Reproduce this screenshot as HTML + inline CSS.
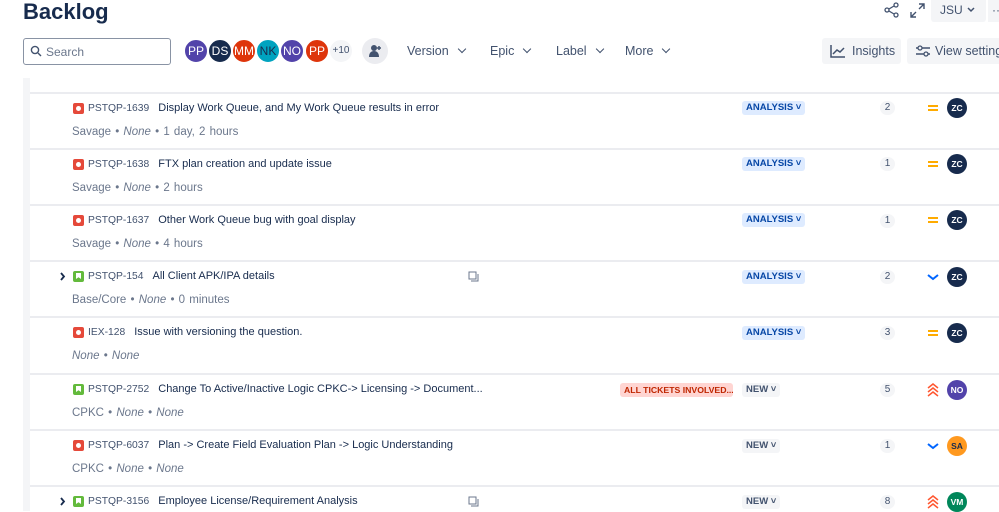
<!DOCTYPE html>
<html><head><meta charset="utf-8"><style>
*{margin:0;padding:0;box-sizing:border-box}
body{width:999px;height:511px;overflow:hidden;background:#fff;font-family:"Liberation Sans",sans-serif;color:#172b4d;position:relative}
.abs{position:absolute}
h1{position:absolute;left:23px;top:-1px;font-size:22px;font-weight:600;color:#172b4d}
.search{left:23px;top:38px;width:148px;height:27px;border:1px solid #8993a4;border-radius:3px;font-size:12px;color:#6b778c;padding:6px 0 0 22px}
.av{width:26px;height:26px;border-radius:50%;color:#fff;font-size:12px;text-align:center;line-height:22px;border:2px solid #fff;top:38px}
.flt{top:44px;font-size:12.5px;color:#42526e}
.flt:after{content:"";display:inline-block;width:5px;height:5px;border-right:1.5px solid #42526e;border-bottom:1.5px solid #42526e;transform:rotate(45deg);margin-left:10px;position:relative;top:-3px}
.btn{background:#f4f5f7;border-radius:3px;top:38px;height:26px;font-size:12.5px;color:#42526e;padding:6px 0 0 8px;white-space:nowrap;overflow:hidden}
.strip{left:23px;top:78px;width:7px;height:433px;background:#f4f5f7}
.sep{left:30px;width:969px;height:2px;background:#ebecf0}
.t{font-size:11px;color:#172b4d;white-space:nowrap}
.k{color:#42526e;margin-right:9px;font-size:10.3px}
.m{font-size:11.5px;color:#6b778c;white-space:nowrap;word-spacing:1px}
.ic{width:11px;height:11px;border-radius:2px}
.bug{background:#e5493a}.bug:after{content:"";position:absolute;left:3px;top:3px;width:5px;height:5px;border-radius:50%;background:#fff}
.st{background:#63ba3c}.st:after{content:"";position:absolute;left:3px;top:2px;width:5px;height:6px;background:#fff;clip-path:polygon(0 0,100% 0,100% 100%,50% 70%,0 100%)}
.bd{font-size:9.5px;font-weight:700;padding:1px 4px;border-radius:3px;height:14px;line-height:12px}
.an{background:#deebff;color:#0747a6}
.nw{background:#f4f5f7;color:#42526e}
.rd{background:#ffd5d2;color:#bf2600}
.cnt{width:15px;height:14px;border-radius:7px;background:#f4f5f7;font-size:10px;color:#42526e;text-align:center;line-height:14px}
.ua{width:20px;height:20px;border-radius:50%;color:#fff;font-size:8.5px;font-weight:700;text-align:center;line-height:20px}
</style></head><body>
<h1>Backlog</h1>
<div class="abs search">Search</div>
<svg class="abs" style="left:30px;top:45px" width="12" height="12"><circle cx="5" cy="5" r="3.6" stroke="#42526e" stroke-width="1.4" fill="none"/><path d="M8 8l3 3" stroke="#42526e" stroke-width="1.4"/></svg>
<div class="abs av" style="left:183px;background:#5243aa">PP</div>
<div class="abs av" style="left:207px;background:#172b4d">DS</div>
<div class="abs av" style="left:231px;background:#de350b">MM</div>
<div class="abs av" style="left:255px;background:#00a3bf;color:#172b4d">NK</div>
<div class="abs av" style="left:279px;background:#5243aa">NO</div>
<div class="abs av" style="left:304px;background:#de350b">PP</div>
<div class="abs av" style="left:328px;background:#f4f5f7;color:#42526e;font-size:10px">+10</div>
<div class="abs" style="left:362px;top:38px;width:26px;height:26px;border-radius:50%;background:#ebecf0"></div>
<svg class="abs" style="left:367px;top:43px" width="16" height="16"><circle cx="7" cy="5" r="3" fill="#42526e"/><path d="M2 14c0-4 2-6 5-6s5 2 5 6z" fill="#42526e"/><path d="M12 3v4M10 5h4" stroke="#42526e" stroke-width="1.5"/></svg>
<div class="abs flt" style="left:407px">Version</div>
<div class="abs flt" style="left:490px">Epic</div>
<div class="abs flt" style="left:556px">Label</div>
<div class="abs flt" style="left:625px">More</div>
<div class="abs btn" style="left:822px;width:79px;padding-left:30px">Insights</div>
<svg class="abs" style="left:830px;top:44px" width="16" height="14"><path d="M1 1v12h14" stroke="#42526e" stroke-width="1.5" fill="none"/><path d="M3 10l4-4 3 2 4-4" stroke="#42526e" stroke-width="1.5" fill="none"/></svg>
<div class="abs btn" style="left:907px;width:100px;padding-left:28px">View settings</div>
<svg class="abs" style="left:915px;top:44px" width="16" height="14"><path d="M1 4h14M1 10h14" stroke="#42526e" stroke-width="1.4"/><circle cx="5" cy="4" r="2" fill="#f4f5f7" stroke="#42526e" stroke-width="1.3"/><circle cx="11" cy="10" r="2" fill="#f4f5f7" stroke="#42526e" stroke-width="1.3"/></svg>
<svg class="abs" style="left:884px;top:2px" width="16" height="16"><circle cx="3" cy="8" r="2" fill="none" stroke="#42526e" stroke-width="1.3"/><circle cx="12" cy="3" r="2" fill="none" stroke="#42526e" stroke-width="1.3"/><circle cx="12" cy="13" r="2" fill="none" stroke="#42526e" stroke-width="1.3"/><path d="M5 7l5-3M5 9l5 3" stroke="#42526e" stroke-width="1.3"/></svg>
<svg class="abs" style="left:910px;top:3px" width="15" height="15"><path d="M9 1h5v5M14 1l-5 5M6 14H1V9M1 14l5-5" stroke="#42526e" stroke-width="1.4" fill="none"/></svg>
<div class="abs" style="left:931px;top:0;width:55px;height:22px;background:#f4f5f7;border-radius:0 0 3px 3px;font-size:12px;color:#42526e;padding:3px 0 0 9px">JSU</div>
<svg class="abs" style="left:967px;top:7px" width="8" height="6"><path d="M1 1l3 3 3-3" stroke="#42526e" stroke-width="1.5" fill="none"/></svg>
<div class="abs" style="left:988px;top:0;width:11px;height:22px;background:#f4f5f7;font-size:12px;color:#42526e;padding:3px 0 0 4px">··</div>
<div class="abs strip"></div>

<div class="abs sep" style="top:92px"></div>
<div class="abs sep" style="top:148px"></div>
<div class="abs sep" style="top:204px"></div>
<div class="abs sep" style="top:260px"></div>
<div class="abs sep" style="top:316px"></div>
<div class="abs sep" style="top:373px"></div>
<div class="abs sep" style="top:429px"></div>
<div class="abs sep" style="top:485px"></div>

<div class="abs ic bug" style="left:73px;top:103px"></div><div class="abs t" style="left:88px;top:102px"><span class="k">PSTQP-1639</span>Display Work Queue, and My Work Queue results in error</div><div class="abs m" style="left:72px;top:126px">Savage • <i>None</i> • 1 day, 2 hours</div>
<div class="abs ic bug" style="left:73px;top:159px"></div><div class="abs t" style="left:88px;top:158px"><span class="k">PSTQP-1638</span>FTX plan creation and update issue</div><div class="abs m" style="left:72px;top:182px">Savage • <i>None</i> • 2 hours</div>
<div class="abs ic bug" style="left:73px;top:215px"></div><div class="abs t" style="left:88px;top:214px"><span class="k">PSTQP-1637</span>Other Work Queue bug with goal display</div><div class="abs m" style="left:72px;top:238px">Savage • <i>None</i> • 4 hours</div>
<svg class="abs" style="left:60px;top:272px" width="6" height="9"><path d="M1 1l3 3.5L1 8" stroke="#172b4d" stroke-width="1.8" fill="none"/></svg><div class="abs ic st" style="left:73px;top:271px"></div><div class="abs t" style="left:88px;top:270px"><span class="k">PSTQP-154</span>All Client APK/IPA details</div><div class="abs m" style="left:72px;top:294px">Base/Core • <i>None</i> • 0 minutes</div>
<div class="abs ic bug" style="left:73px;top:327px"></div><div class="abs t" style="left:88px;top:326px"><span class="k">IEX-128</span>Issue with versioning the question.</div><div class="abs m" style="left:72px;top:350px"><i>None</i> • <i>None</i></div>
<div class="abs ic st" style="left:73px;top:384px"></div><div class="abs t" style="left:88px;top:383px"><span class="k">PSTQP-2752</span>Change To Active/Inactive Logic CPKC-&gt; Licensing -&gt; Document...</div><div class="abs m" style="left:72px;top:407px">CPKC • <i>None</i> • <i>None</i></div>
<div class="abs ic bug" style="left:73px;top:440px"></div><div class="abs t" style="left:88px;top:439px"><span class="k">PSTQP-6037</span>Plan -&gt; Create Field Evaluation Plan -&gt; Logic Understanding</div><div class="abs m" style="left:72px;top:463px">CPKC • <i>None</i> • <i>None</i></div>
<svg class="abs" style="left:60px;top:497px" width="6" height="9"><path d="M1 1l3 3.5L1 8" stroke="#172b4d" stroke-width="1.8" fill="none"/></svg><div class="abs ic st" style="left:73px;top:496px"></div><div class="abs t" style="left:88px;top:495px"><span class="k">PSTQP-3156</span>Employee License/Requirement Analysis</div>

<svg class="abs" style="left:468px;top:271px" width="11" height="11"><rect x="1" y="1" width="7" height="7" fill="none" stroke="#6b778c"/><path d="M3 10h7V3" stroke="#6b778c" fill="none"/></svg>
<svg class="abs" style="left:468px;top:496px" width="11" height="11"><rect x="1" y="1" width="7" height="7" fill="none" stroke="#6b778c"/><path d="M3 10h7V3" stroke="#6b778c" fill="none"/></svg>

<div class="abs bd an" style="left:742px;top:101px">ANALYSIS ˅</div>
<div class="abs bd an" style="left:742px;top:157px">ANALYSIS ˅</div>
<div class="abs bd an" style="left:742px;top:213px">ANALYSIS ˅</div>
<div class="abs bd an" style="left:742px;top:270px">ANALYSIS ˅</div>
<div class="abs bd an" style="left:742px;top:326px">ANALYSIS ˅</div>
<div class="abs bd rd" style="left:620px;top:383px;width:113px;overflow:hidden;white-space:nowrap;font-size:8.7px">ALL TICKETS INVOLVED...</div>
<div class="abs bd nw" style="left:742px;top:383px">NEW ˅</div>
<div class="abs bd nw" style="left:742px;top:439px">NEW ˅</div>
<div class="abs bd nw" style="left:742px;top:495px">NEW ˅</div>

<div class="abs cnt" style="left:880px;top:101px">2</div>
<div class="abs cnt" style="left:880px;top:157px">1</div>
<div class="abs cnt" style="left:880px;top:214px">1</div>
<div class="abs cnt" style="left:880px;top:270px">2</div>
<div class="abs cnt" style="left:880px;top:326px">3</div>
<div class="abs cnt" style="left:880px;top:383px">5</div>
<div class="abs cnt" style="left:880px;top:439px">1</div>
<div class="abs cnt" style="left:880px;top:495px">8</div>

<svg class="abs" style="left:927px;top:102px" width="12" height="12"><path d="M1 4h10M1 8h10" stroke="#ffab00" stroke-width="2"/></svg>
<svg class="abs" style="left:927px;top:158px" width="12" height="12"><path d="M1 4h10M1 8h10" stroke="#ffab00" stroke-width="2"/></svg>
<svg class="abs" style="left:927px;top:214px" width="12" height="12"><path d="M1 4h10M1 8h10" stroke="#ffab00" stroke-width="2"/></svg>
<svg class="abs" style="left:927px;top:271px" width="12" height="12"><path d="M1 4l5 4 5-4" stroke="#0065ff" stroke-width="2" fill="none"/></svg>
<svg class="abs" style="left:927px;top:327px" width="12" height="12"><path d="M1 4h10M1 8h10" stroke="#ffab00" stroke-width="2"/></svg>
<svg class="abs" style="left:927px;top:383px" width="12" height="14"><path d="M1 5l5-4 5 4M1 9l5-4 5 4M1 13l5-4 5 4" stroke="#ff5630" stroke-width="1.5" fill="none"/></svg>
<svg class="abs" style="left:927px;top:440px" width="12" height="12"><path d="M1 4l5 4 5-4" stroke="#0065ff" stroke-width="2" fill="none"/></svg>
<svg class="abs" style="left:927px;top:495px" width="12" height="14"><path d="M1 5l5-4 5 4M1 9l5-4 5 4M1 13l5-4 5 4" stroke="#ff5630" stroke-width="1.5" fill="none"/></svg>

<div class="abs ua" style="left:947px;top:98px;background:#172b4d">ZC</div>
<div class="abs ua" style="left:947px;top:154px;background:#172b4d">ZC</div>
<div class="abs ua" style="left:947px;top:210px;background:#172b4d">ZC</div>
<div class="abs ua" style="left:947px;top:267px;background:#172b4d">ZC</div>
<div class="abs ua" style="left:947px;top:323px;background:#172b4d">ZC</div>
<div class="abs ua" style="left:947px;top:380px;background:#5243aa">NO</div>
<div class="abs ua" style="left:947px;top:436px;background:#ff991f;color:#172b4d">SA</div>
<div class="abs ua" style="left:947px;top:492px;background:#00875a">VM</div>
</body></html>
